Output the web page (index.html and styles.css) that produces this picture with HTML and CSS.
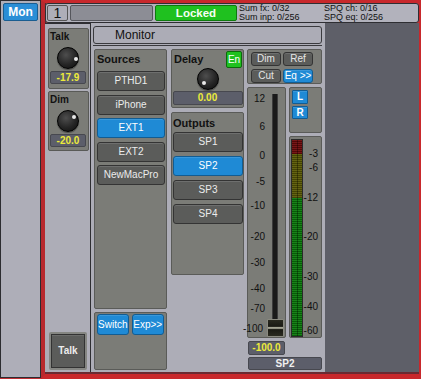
FILE: index.html
```html
<!DOCTYPE html>
<html>
<head>
<meta charset="utf-8">
<link rel="stylesheet" href="styles.css">
</head>
<body>
<div class="side"><div class="mon">Mon</div></div>
<div class="frame">
  <div class="topbar">
    <div class="num">1</div>
    <div class="field"></div>
    <div class="locked">Locked</div>
    <div class="stats"><span>Sum fx: 0/32</span><span>Sum inp: 0/256</span></div>
    <div class="stats"><span>SPQ ch: 0/16</span><span>SPQ eq: 0/256</span></div>
  </div>
  <div class="content">
    <div class="strip">
      <div class="kpanel">
        <div class="klabel">Talk</div>
        <div class="knob"><span class="dot dot-talk"></span></div>
        <div class="val">-17.9</div>
      </div>
      <div class="kpanel">
        <div class="klabel">Dim</div>
        <div class="knob"><span class="dot dot-dim"></span></div>
        <div class="val">-20.0</div>
      </div>
      <div class="grow"></div>
      <div class="btn talkbtn">Talk</div>
    </div>
    <div class="main">
      <div class="mhead">Monitor</div>
      <div class="cols">
        <div class="col c1">
          <div class="panel sources">
            <div class="plabel">Sources</div>
            <div class="btnlist">
              <div class="btn">PTHD1</div>
              <div class="btn">iPhone</div>
              <div class="btn on">EXT1</div>
              <div class="btn">EXT2</div>
              <div class="btn">NewMacPro</div>
            </div>
          </div>
          <div class="panel bottom">
            <div class="btn on sw">Switch</div>
            <div class="btn on ex">Exp&gt;&gt;</div>
          </div>
        </div>
        <div class="col c2">
          <div class="panel delay">
            <div class="dhead"><span class="plabel">Delay</span><span class="en">En</span></div>
            <div class="knob dknob"><span class="dot dot-delay"></span></div>
            <div class="val dval">0.00</div>
          </div>
          <div class="panel outputs">
            <div class="plabel">Outputs</div>
            <div class="btnlist olist">
              <div class="btn">SP1</div>
              <div class="btn on">SP2</div>
              <div class="btn">SP3</div>
              <div class="btn">SP4</div>
            </div>
          </div>
        </div>
        <div class="col c3">
          <div class="panel topbtns">
            <div class="btn sm">Dim</div>
            <div class="btn sm">Ref</div>
            <div class="btn sm">Cut</div>
            <div class="btn sm on">Eq &gt;&gt;</div>
          </div>
          <div class="frow">
            <div class="panel fader">
              <span class="tick" style="top:5px">12</span>
              <span class="tick" style="top:33px">6</span>
              <span class="tick" style="top:62px">0</span>
              <span class="tick" style="top:88px">-5</span>
              <span class="tick" style="top:112px">-10</span>
              <span class="tick" style="top:143px">-20</span>
              <span class="tick" style="top:169px">-30</span>
              <span class="tick" style="top:195px">-40</span>
              <span class="tick" style="top:215px">-70</span>
              <span class="tick t100" style="top:235px">-100</span>
              <div class="track"></div>
              <div class="cap"></div>
            </div>
            <div class="stack">
              <div class="panel lr">
                <div class="btn on lrb">L</div>
                <div class="btn on lrb">R</div>
              </div>
              <div class="panel meter">
                <div class="bar"><div class="red"></div><div class="yel"></div><div class="grn"></div></div>
                <span class="mtick" style="top:11px">-3</span>
                <span class="mtick" style="top:25px">-6</span>
                <span class="mtick" style="top:55px">-12</span>
                <span class="mtick" style="top:94px">-20</span>
                <span class="mtick" style="top:134px">-30</span>
                <span class="mtick" style="top:164px">-40</span>
                <span class="mtick" style="top:188px">-60</span>
              </div>
            </div>
          </div>
          <div class="val fval">-100.0</div>
          <div class="outname">SP2</div>
        </div>
      </div>
    </div>
    <div class="dark"></div>
  </div>
  <div class="maroon"></div>
</div>
</body>
</html>
```

FILE: styles.css
```css
* { box-sizing: border-box; }
html, body { margin: 0; padding: 0; }
body {
  width: 421px;
  height: 379px;
  display: flex;
  background: #c03035;
  font-family: "Liberation Sans", Arial, sans-serif;
  overflow: hidden;
}
.side {
  width: 41px;
  height: 378px;
  background: #aeaeb8;
  border: 1px solid #2c2c30;
  padding: 2px 2px;
}
.mon {
  width: 35px;
  height: 18px;
  background: #2a8ed6;
  border: 1px solid #1a5d90;
  border-radius: 2px;
  color: #fff;
  font-weight: bold;
  font-size: 12px;
  line-height: 16px;
  text-align: center;
}
.frame {
  flex: 1;
  display: flex;
  flex-direction: column;
  border-left: 4px solid #b8292e;
  border-top: 3px solid #c8282c;
  border-right: 2px solid #c8282c;
  border-bottom: 5px solid #c8282c;
  box-shadow: inset 1px 0 0 #5a2a30;
}
.topbar {
  height: 20px;
  display: flex;
  align-items: center;
  gap: 2px;
  padding: 0 1px;
  background: #b2b2bc;
  border: 1px solid #2e2e32;
  border-radius: 3px;
}
.num {
  width: 21px;
  height: 16px;
  border: 1px solid #555;
  border-radius: 2px;
  background: #aeaeb8;
  font-size: 14px;
  line-height: 14px;
  text-align: center;
  color: #111;
}
.field {
  width: 83px;
  height: 16px;
  background: #8c8d95;
  border: 1px solid #55565c;
  border-radius: 2px;
}
.locked {
  width: 82px;
  height: 16px;
  background: #1fc11f;
  border: 1px solid #0e7a0e;
  border-radius: 2px;
  color: #f4fff4;
  font-weight: bold;
  font-size: 11.5px;
  line-height: 14px;
  text-align: center;
}
.stats {
  width: 83px;
  display: flex;
  flex-direction: column;
  font-size: 9px;
  line-height: 9px;
  color: #111;
  white-space: nowrap;
}
.content {
  height: 349px;
  display: flex;
}
.strip {
  width: 46px;
  display: flex;
  flex-direction: column;
  gap: 2px;
  padding: 4px 2px 2px 3px;
  background: #adadb7;
  border-top: 1px solid #2e2e32;
  border-right: 1px solid #2e2e32;
}
.kpanel {
  width: 41px;
  height: 61px;
  background: #7b7c77;
  border: 1px solid #595a57;
  border-radius: 2px;
  padding: 2px 2px 0 1px;
  display: flex;
  flex-direction: column;
  align-items: center;
}
.kpanel + .kpanel { height: 60px; }
.klabel {
  align-self: flex-start;
  font-weight: bold;
  font-size: 10px;
  line-height: 12px;
  color: #111;
}
.knob {
  position: relative;
  width: 22px;
  height: 22px;
  margin-top: 4px;
  border-radius: 50%;
  background: radial-gradient(circle at 40% 35%, #4e4e4e 0, #252525 55%, #0c0c0c 100%);
  border: 1px solid #000;
  box-shadow: 0 1px 1px rgba(0,0,0,.4);
}
.dot {
  position: absolute;
  width: 4px;
  height: 4px;
  border-radius: 50%;
  background: #e8e8e8;
}
.dot-talk { left: 16px; top: 9px; }
.dot-dim { left: 14px; top: 4px; }
.dot-delay { left: 4px; top: 12px; }
.val {
  width: 36px;
  height: 13px;
  margin-top: 2px;
  background: #5c5e6a;
  border: 1px solid #47484f;
  border-radius: 2px;
  color: #ecea3a;
  font-weight: bold;
  font-size: 10px;
  line-height: 11px;
  text-align: center;
}
.grow { flex: 1; }
.btn {
  height: 20px;
  background: #5b5c5a;
  border: 1px solid #343434;
  border-radius: 3px;
  color: #ececec;
  font-size: 10px;
  line-height: 18px;
  text-align: center;
  box-shadow: inset 0 1px 0 rgba(255,255,255,.12);
  white-space: nowrap;
}
.btn.on {
  background: #1f8ad5;
  border-color: #125c92;
  color: #fff;
}
.talkbtn {
  width: 38px;
  height: 38px;
  margin-left: 1px;
  font-weight: bold;
  line-height: 34px;
  border: 2px solid #858682;
  border-radius: 2px;
  box-shadow: inset 0 0 0 1px #333, inset 0 2px 0 rgba(255,255,255,.1);
}
.main {
  width: 234px;
  padding: 3px 3px 2px 2px;
  background: #adadb7;
  display: flex;
  flex-direction: column;
}
.mhead {
  height: 18px;
  background: #acacb6;
  border: 1px solid #3a3a3e;
  border-radius: 3px;
  padding-left: 21px;
  font-size: 12px;
  line-height: 16px;
  color: #111;
}
.cols {
  flex: 1;
  display: flex;
  margin-top: 1px;
  padding-top: 3px;
  border-top: 1px solid #3a3a3e;
}
.col {
  display: flex;
  flex-direction: column;
}
.c1 { width: 73px; margin-left: 1px; gap: 3px; }
.c2 { width: 73px; margin-left: 4px; gap: 4px; }
.c3 { width: 75px; margin-left: 3px; }
.panel {
  background: #7b7c77;
  border: 1px solid #5a5b58;
  border-radius: 2px;
}
.plabel {
  font-weight: bold;
  font-size: 11px;
  line-height: 13px;
  color: #111;
}
.sources {
  height: 260px;
  padding: 3px 1px 0 2px;
}
.btnlist {
  margin-top: 5px;
  display: flex;
  flex-direction: column;
  gap: 3.5px;
  width: 68px;
}
.bottom {
  flex: 1;
  display: flex;
  gap: 3px;
  padding: 1px 2px;
  align-items: flex-start;
}
.bottom .btn { height: 21px; line-height: 19px; }
.sw { width: 32px; }
.ex { width: 33px; }
.delay {
  height: 59px;
  padding: 1px 1px 0 1px;
  display: flex;
  flex-direction: column;
  align-items: center;
}
.dhead {
  align-self: stretch;
  display: flex;
  justify-content: space-between;
  align-items: center;
  padding-left: 1px;
}
.en {
  width: 16px;
  height: 17px;
  background: #1fc11f;
  border: 1px solid #0c6a0c;
  border-radius: 2px;
  color: #fff;
  font-size: 10px;
  line-height: 15px;
  text-align: center;
}
.dknob { margin-top: 0; margin-left: 1px; }
.dval { width: 70px; height: 14px; line-height: 12px; margin-top: 1px; }
.outputs {
  height: 163px;
  padding: 4px 1px 0 1px;
}
.olist { width: 70px; gap: 4px; margin-top: 2px; }
.topbtns {
  height: 35px;
  display: grid;
  grid-template-columns: 30px 30px;
  column-gap: 2px;
  row-gap: 3px;
  padding: 2px 0 0 3px;
}
.btn.sm {
  height: 14px;
  line-height: 12px;
  color: #e6e6e6;
}
.btn.sm.on { color: #fff; }
.frow {
  display: flex;
  gap: 3px;
  margin-top: 3px;
  height: 251px;
}
.fader {
  position: relative;
  width: 39px;
  height: 251px;
}
.tick {
  position: absolute;
  right: 20px;
  font-size: 10px;
  line-height: 12px;
  color: #111;
}
.t100 { right: 22px; }
.track {
  position: absolute;
  left: 24px;
  top: 6px;
  width: 6px;
  height: 243px;
  background: #1a1a1a;
  border-left: 1px solid #3c3c3c;
  border-right: 1px solid #3c3c3c;
}
.cap {
  position: absolute;
  left: 19px;
  top: 231px;
  width: 17px;
  height: 18px;
  border: 1px solid #8a8a80;
  border-radius: 1px;
  background: linear-gradient(to bottom, #2a2a20 0, #1a1a14 40%, #8a8a78 45%, #cfcfc0 50%, #6a6a5c 55%, #1a1a14 60%, #2a2a20 100%);
}
.stack {
  width: 33px;
  display: flex;
  flex-direction: column;
  gap: 3px;
}
.lr {
  height: 46px;
  padding: 2px 0 0 2px;
  display: flex;
  flex-direction: column;
  gap: 2px;
}
.btn.lrb {
  width: 16px;
  height: 14px;
  border-radius: 1px;
  font-weight: bold;
  font-size: 10px;
  line-height: 12px;
}
.btn.lrb + .btn.lrb { height: 13px; line-height: 11px; }
.meter {
  position: relative;
  flex: 1;
  padding: 2px 0 0 1px;
}
.bar {
  width: 12px;
  height: 198px;
  display: flex;
  flex-direction: column;
  border: 1px solid #2a2a2a;
}
.bar > div {
  background-image:
    linear-gradient(to right, transparent 0 4.5px, rgba(0,0,0,.35) 4.5px 5.5px, transparent 5.5px),
    repeating-linear-gradient(to bottom, rgba(255,255,255,.06) 0 1px, rgba(0,0,0,.25) 1px 2px);
}
.red { height: 14px; background-color: #6e0a0a; }
.yel { height: 44px; background-color: #5a5a04; }
.grn { flex: 1; background-color: #0b7a0b; }
.mtick {
  position: absolute;
  right: 3px;
  font-size: 10px;
  line-height: 12px;
  color: #111;
}
.fval {
  width: 37px;
  height: 14px;
  margin-top: 3px;
  margin-left: 1px;
  line-height: 12px;
}
.outname {
  height: 13px;
  width: 74px;
  margin-top: 2px;
  margin-left: 1px;
  background: #5c5e6a;
  border: 1px solid #47484f;
  border-radius: 2px;
  color: #f0f0f0;
  font-weight: bold;
  font-size: 10px;
  line-height: 11px;
  text-align: center;
}
.dark {
  flex: 1;
  background: #5e5f68;
}
.maroon {
  height: 2px;
  background: #6a2a32;
}
```
